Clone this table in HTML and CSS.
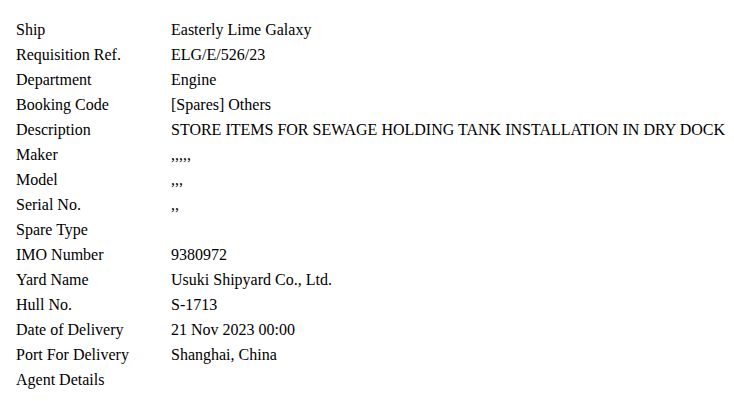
FILE: index.html
```html
<!DOCTYPE html>
<html>
<head>
<meta charset="utf-8">
<link rel="stylesheet" href="styles.css">
</head>
<body>
<div class="details">
  <div class="label">Ship</div><div class="value">Easterly Lime Galaxy</div>
  <div class="label">Requisition Ref.</div><div class="value">ELG/E/526/23</div>
  <div class="label">Department</div><div class="value">Engine</div>
  <div class="label">Booking Code</div><div class="value">[Spares] Others</div>
  <div class="label">Description</div><div class="value">STORE ITEMS FOR SEWAGE HOLDING TANK INSTALLATION IN DRY DOCK</div>
  <div class="label">Maker</div><div class="value">,,,,,</div>
  <div class="label">Model</div><div class="value">,,,</div>
  <div class="label">Serial No.</div><div class="value">,,</div>
  <div class="label">Spare Type</div><div class="value"></div>
  <div class="label">IMO Number</div><div class="value">9380972</div>
  <div class="label">Yard Name</div><div class="value">Usuki Shipyard Co., Ltd.</div>
  <div class="label">Hull No.</div><div class="value">S-1713</div>
  <div class="label">Date of Delivery</div><div class="value">21 Nov 2023 00:00</div>
  <div class="label">Port For Delivery</div><div class="value">Shanghai, China</div>
  <div class="label">Agent Details</div><div class="value"></div>
</div>
</body>
</html>
```
FILE: styles.css
```css
html, body {
  margin: 0;
  padding: 0;
  background: #fff;
}
body {
  font-family: "Liberation Serif", "Times New Roman", serif;
  font-size: 16px;
  color: #000;
}
.details {
  display: grid;
  grid-template-columns: 155px auto;
  grid-auto-rows: 25px;
  padding: 17px 0 0 16px;
  line-height: 25px;
}
.label, .value {
  white-space: nowrap;
  height: 25px;
}
```
